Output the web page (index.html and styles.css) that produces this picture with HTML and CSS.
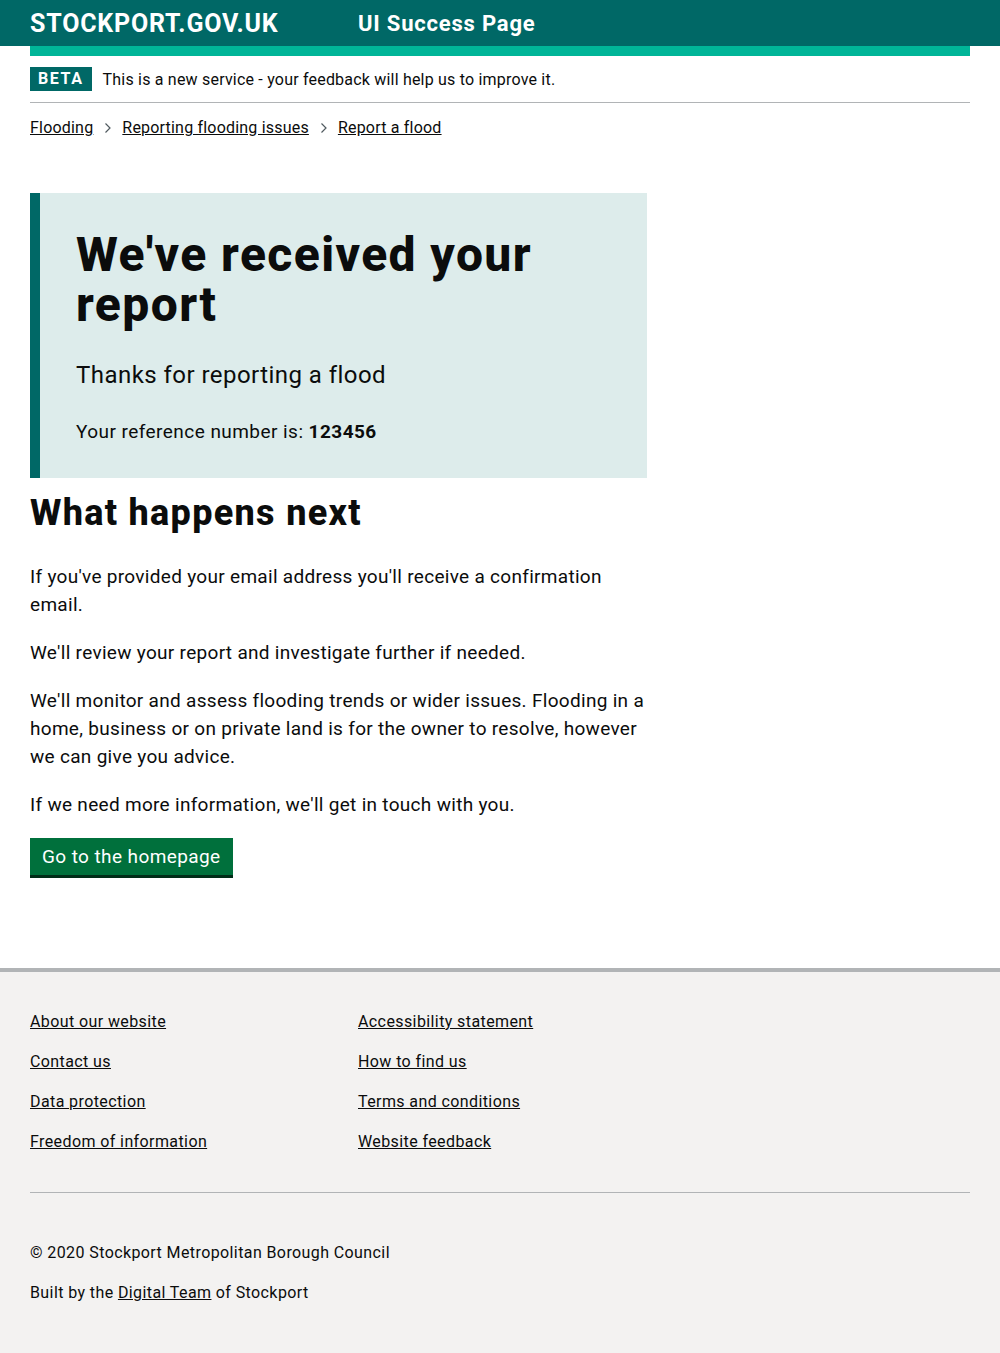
FILE: index.html
```html
<!DOCTYPE html>
<html lang="en">
<head>
<meta charset="utf-8">
<title>UI Success Page</title>
<link rel="stylesheet" href="styles.css">
</head>
<body>
<header class="site-header">
  <div class="header-inner">
    <span class="logo">STOCKPORT.GOV.UK</span>
    <span class="service-name">UI Success Page</span>
  </div>
</header>
<div class="container">
  <div class="accent-bar"></div>
  <div class="beta">
    <strong class="beta-tag">BETA</strong>
    <span class="beta-text">This is a new service - your feedback will help us to improve it.</span>
  </div>
  <nav class="breadcrumbs">
    <a href="#">Flooding</a>
    <svg class="chevron" width="8" height="12" viewBox="0 0 8 12"><path d="M1.5 1.5 L6 6 L1.5 10.5" fill="none" stroke="#505a5f" stroke-width="1.2"/></svg>
    <a href="#">Reporting flooding issues</a>
    <svg class="chevron" width="8" height="12" viewBox="0 0 8 12"><path d="M1.5 1.5 L6 6 L1.5 10.5" fill="none" stroke="#505a5f" stroke-width="1.2"/></svg>
    <a href="#">Report a flood</a>
  </nav>
  <main class="main">
    <div class="panel">
      <h1 class="panel-title">We've received your report</h1>
      <p class="panel-sub">Thanks for reporting a flood</p>
      <p class="panel-ref">Your reference number is: <strong>123456</strong></p>
    </div>
    <h2 class="heading">What happens next</h2>
    <p class="body">If you've provided your email address you'll receive a confirmation email.</p>
    <p class="body">We'll review your report and investigate further if needed.</p>
    <p class="body">We'll monitor and assess flooding trends or wider issues. Flooding in a home, business or on private land is for the owner to resolve, however we can give you advice.</p>
    <p class="body">If we need more information, we'll get in touch with you.</p>
    <a class="button" href="#">Go to the homepage</a>
  </main>
</div>
<footer class="footer">
  <div class="container">
    <div class="footer-links">
      <a href="#">About our website</a>
      <a href="#">Accessibility statement</a>
      <a href="#">Contact us</a>
      <a href="#">How to find us</a>
      <a href="#">Data protection</a>
      <a href="#">Terms and conditions</a>
      <a href="#">Freedom of information</a>
      <a href="#">Website feedback</a>
    </div>
    <hr class="footer-rule">
    <p class="footer-text">© 2020 Stockport Metropolitan Borough Council</p>
    <p class="footer-text">Built by the <a href="#">Digital Team</a> of Stockport</p>
  </div>
</footer>
</body>
</html>
```
FILE: styles.css
```css
* { box-sizing: border-box; }
body {
  margin: 0;
  font-family: Roboto, "Liberation Sans", Arial, sans-serif;
  color: #0b0c0c;
  background: #fff;
}
a { color: #0b0c0c; }
.site-header {
  background: #006866;
  height: 46px;
}
.header-inner {
  padding: 0 30px;
  height: 46px;
  display: flex;
  align-items: center;
  color: #fff;
  font-weight: 700;
}
.logo {
  font-size: 25px;
  width: 328px;
  letter-spacing: 0.8px;
}
.service-name {
  font-size: 22px;
  letter-spacing: 0.8px;
}
.container {
  padding: 0 30px;
}
.accent-bar {
  height: 10px;
  background: #00b598;
}
.beta {
  display: flex;
  align-items: center;
  margin-top: 11px;
  padding-bottom: 11px;
  border-bottom: 1px solid #b1b4b6;
}
.beta-tag {
  background: #006866;
  color: #fff;
  font-size: 16px;
  font-weight: 700;
  letter-spacing: 1.6px;
  height: 24px;
  line-height: 24px;
  padding: 0 8px;
  margin-right: 11px;
}
.beta-text {
  font-size: 16px;
  letter-spacing: 0.2px;
  color: #0b0c0c;
}
.breadcrumbs {
  display: flex;
  align-items: center;
  margin-top: 15px;
  font-size: 16px;
  line-height: 20px;
  letter-spacing: 0.2px;
  color: #0b0c0c;
}
.chevron { margin: 0 10px 0 11px; }
.main {
  padding-top: 55px;
  width: 617px;
  padding-bottom: 93px;
}
.panel {
  background: #ddeceb;
  border-left: 10px solid #006866;
  padding: 37px 36px 33px;
}
.panel-title {
  margin: 0;
  font-size: 48px;
  line-height: 50px;
  font-weight: 800;
  letter-spacing: 1.4px;
}
.panel-sub {
  margin: 30px 0 0;
  font-size: 24px;
  line-height: 30px;
  font-weight: 400;
  letter-spacing: 0.45px;
}
.panel-ref {
  margin: 29px 0 0;
  font-size: 19px;
  line-height: 26px;
  letter-spacing: 0.45px;
}
.panel-ref strong { font-weight: 700; }
.heading {
  margin: 14px 0 0;
  font-size: 36px;
  line-height: 42px;
  font-weight: 800;
  letter-spacing: 1.3px;
}
.body {
  margin: 20px 0 0;
  font-size: 19px;
  line-height: 28px;
  letter-spacing: 0.3px;
  color: #0b0c0c;
}
.heading + .body { margin-top: 29px; }
.button {
  display: inline-block;
  margin-top: 19px;
  background: #00703c;
  color: #fff;
  text-decoration: none;
  font-size: 19px;
  line-height: 24px;
  letter-spacing: 0.4px;
  padding: 7px 12px 6px;
  box-shadow: 0 3px 0 #002d18;
}
.footer {
  background: #f3f2f1;
  border-top: 4px solid #b1b4b6;
  padding-top: 40px;
  padding-bottom: 60px;
}
.footer-links {
  display: grid;
  grid-template-columns: 328px 1fr;
  row-gap: 20px;
  font-size: 16px;
  line-height: 20px;
  letter-spacing: 0.4px;
}
.footer-links a { color: #0b0c0c; }
.footer-rule {
  border: 0;
  border-top: 1px solid #b1b4b6;
  margin: 40px 0 50px;
}
.footer-text {
  margin: 0 0 20px;
  font-size: 16px;
  line-height: 20px;
  letter-spacing: 0.4px;
}
```
